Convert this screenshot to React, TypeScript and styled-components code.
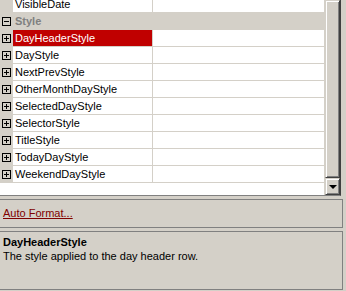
import styled, { createGlobalStyle } from 'styled-components';

const GlobalStyle = createGlobalStyle`
  html, body {
    margin: 0;
    padding: 0;
    background: #d4d0c8;
  }
  body {
    font-family: 'Liberation Sans', Arial, sans-serif;
    font-size: 11px;
    color: #000;
  }
`;

const Window = styled.div`
  width: 346px;
  height: 291px;
  overflow: hidden;
  background: #d4d0c8;
  display: flex;
  flex-direction: column;
`;

const GridFrame = styled.div`
  width: 340px;
  height: 195px;
  display: flex;
  border-right: 1px solid #404040;
  border-bottom: 1px solid #808080;
  background: #fff;
`;

const GridView = styled.div`
  width: 324px;
  overflow: hidden;
  border-right: 1px solid #d4d0c8;
`;

const RowList = styled.div`
  margin-top: -4px;
  display: flex;
  flex-direction: column;
`;

const Row = styled.div<{ $category?: boolean }>`
  display: grid;
  grid-template-columns: 13px 139px 1px 1fr;
  height: 16px;
  border-bottom: 1px solid #d4d0c8;
  background: ${(p) => (p.$category ? '#d4d0c8' : '#fff')};
`;

const Margin = styled.div`
  display: flex;
  align-items: center;
  padding-left: 2px;
  background: #d4d0c8;
`;

const Name = styled.div<{ $selected?: boolean; $category?: boolean }>`
  display: flex;
  align-items: center;
  padding-left: 2px;
  white-space: nowrap;
  overflow: hidden;
  background: ${(p) => (p.$selected ? '#c00000' : 'transparent')};
  color: ${(p) => (p.$selected ? '#fff' : p.$category ? '#808080' : '#000')};
  font-weight: ${(p) => (p.$category ? 700 : 400)};
`;

const Divider = styled.div<{ $category?: boolean }>`
  background: ${(p) => (p.$category ? 'transparent' : '#d4d0c8')};
`;

const Value = styled.div``;

const ExpandBox = styled.span`
  width: 7px;
  height: 7px;
  border: 1px solid #000;
  display: block;
  position: relative;
  &::before {
    content: '';
    position: absolute;
    left: 1px;
    top: 3px;
    width: 5px;
    height: 1px;
    background: #000;
  }
`;

const PlusBox = styled(ExpandBox)`
  &::after {
    content: '';
    position: absolute;
    left: 3px;
    top: 1px;
    width: 1px;
    height: 5px;
    background: #000;
  }
`;

const Scrollbar = styled.div`
  width: 15px;
  display: flex;
  flex-direction: column;
  background: #d4d0c8;
`;

const ScrollButton = styled.div<{ $grow?: boolean }>`
  box-sizing: border-box;
  ${(p) => (p.$grow ? 'flex: 1;' : 'height: 17px;')}
  border-top: 1px solid #d4d0c8;
  border-left: 1px solid #d4d0c8;
  border-right: 1px solid #404040;
  border-bottom: 1px solid #404040;
  box-shadow: inset 1px 1px 0 #fff, inset -1px -1px 0 #808080;
  display: flex;
  align-items: center;
  justify-content: center;
`;

const Arrow = styled.span`
  width: 0;
  height: 0;
  border-left: 4px solid transparent;
  border-right: 4px solid transparent;
  border-top: 4px solid #000;
`;

const Pane = styled.div<{ $height: number }>`
  width: 339px;
  height: ${(p) => p.$height}px;
  margin-top: 3px;
  border: 1px solid #808080;
  border-left: none;
  padding: 0 0 0 3px;
`;

const CommandLink = styled.a`
  display: inline-block;
  margin-top: 7px;
  color: #800000;
  text-decoration: underline;
  cursor: pointer;
`;

const DescTitle = styled.div`
  margin-top: 4px;
  font-weight: 700;
`;

const DescText = styled.div`
  margin-top: 2px;
`;

const rows = [
  'DayHeaderStyle',
  'DayStyle',
  'NextPrevStyle',
  'OtherMonthDayStyle',
  'SelectedDayStyle',
  'SelectorStyle',
  'TitleStyle',
  'TodayDayStyle',
  'WeekendDayStyle',
];

export default function App() {
  return (
    <Window>
      <GlobalStyle />
      <GridFrame>
        <GridView>
          <RowList>
            <Row>
              <Margin />
              <Name>VisibleDate</Name>
              <Divider />
              <Value />
            </Row>
            <Row $category>
              <Margin>
                <ExpandBox />
              </Margin>
              <Name $category>Style</Name>
              <Divider $category />
              <Value />
            </Row>
            {rows.map((name, i) => (
              <Row key={name}>
                <Margin>
                  <PlusBox />
                </Margin>
                <Name $selected={i === 0}>{name}</Name>
                <Divider />
                <Value />
              </Row>
            ))}
          </RowList>
        </GridView>
        <Scrollbar>
          <ScrollButton $grow />
          <ScrollButton>
            <Arrow />
          </ScrollButton>
        </Scrollbar>
      </GridFrame>
      <Pane $height={27}>
        <CommandLink>Auto Format...</CommandLink>
      </Pane>
      <Pane $height={57}>
        <DescTitle>DayHeaderStyle</DescTitle>
        <DescText>The style applied to the day header row.</DescText>
      </Pane>
    </Window>
  );
}
